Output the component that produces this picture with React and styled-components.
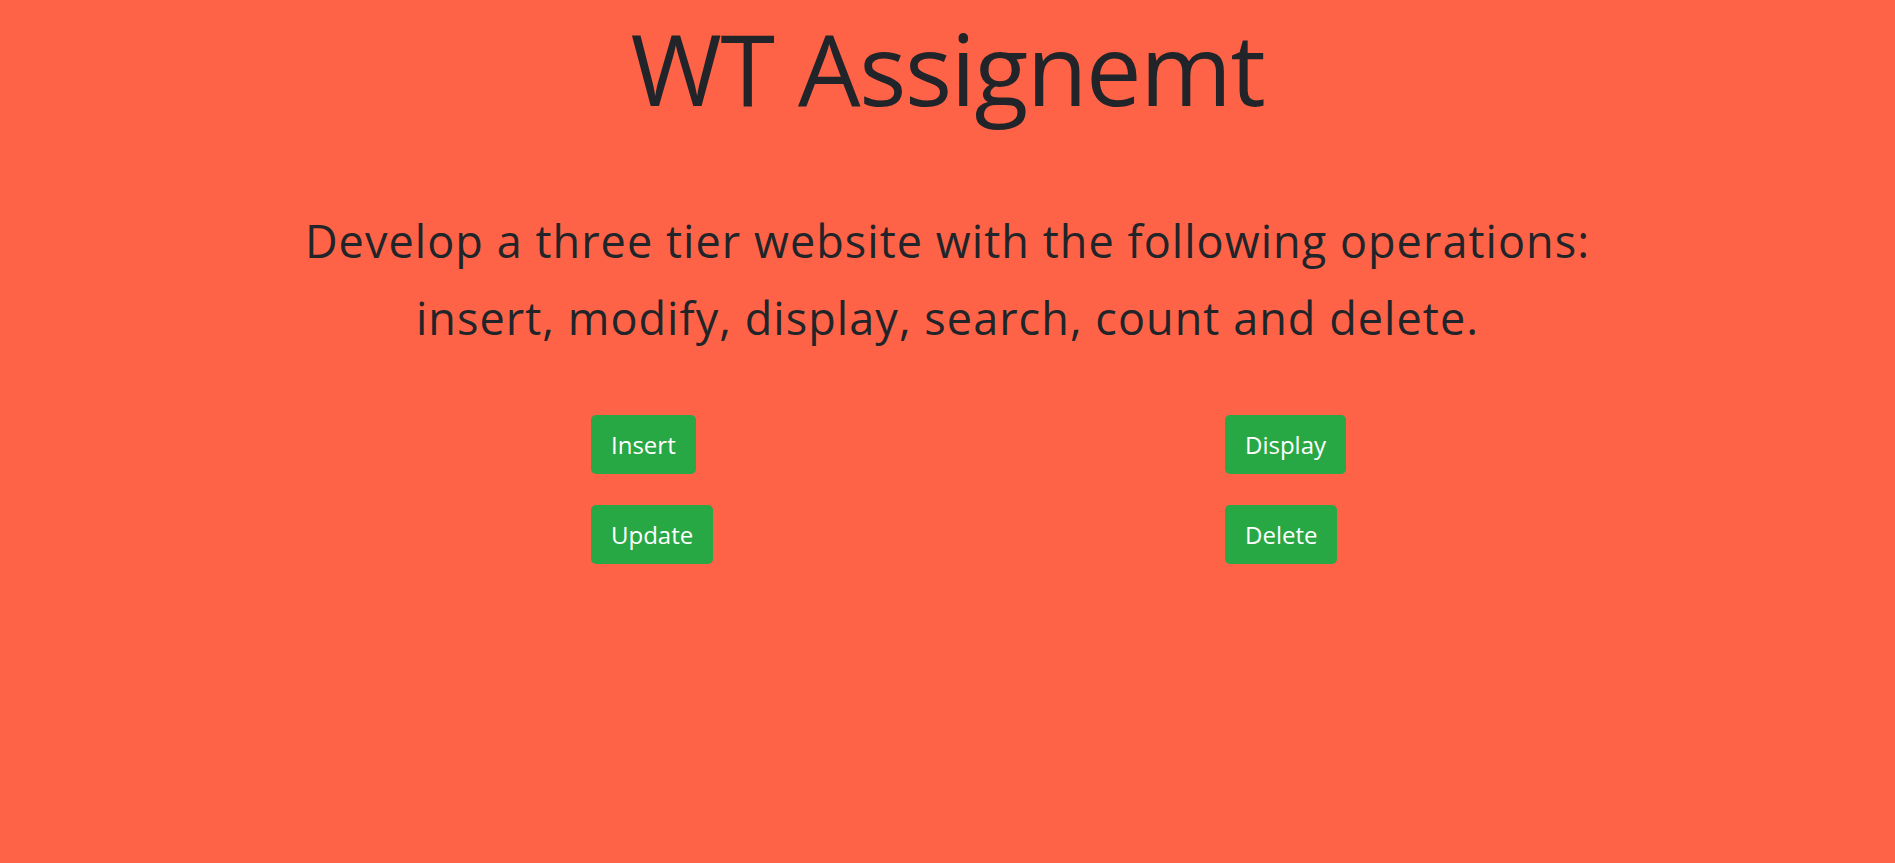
import React from "react";
import styled, { createGlobalStyle } from "styled-components";

const Global = createGlobalStyle`
  html, body { margin: 0; padding: 0; }
  body {
    background: #ff6347;
    font-family: "Open Sans", "Noto Sans", sans-serif;
    color: #212529;
  }
`;

const Page = styled.main`
  min-height: 100vh;
  display: flex;
  flex-direction: column;
`;

const Title = styled.h1`
  margin: 0;
  text-align: center;
  font-size: 99px;
  font-weight: 400;
  letter-spacing: -1.4px;
  line-height: 135px;
`;

const Subtitle = styled.h2`
  margin: 67px 0 0;
  text-align: center;
  font-size: 45px;
  font-weight: 400;
  letter-spacing: 1.05px;
  line-height: 77px;
`;

const ButtonGrid = styled.div`
  margin-top: 59px;
  display: grid;
  grid-template-columns: 634px 634px;
  row-gap: 31px;
  padding-left: 591px;
`;

const Button = styled.button`
  justify-self: start;
  height: 59px;
  padding: 0 20px;
  border: none;
  border-radius: 5px;
  background: #28a745;
  color: #fff;
  font-family: "Open Sans", "Noto Sans", sans-serif;
  font-size: 24px;
  cursor: pointer;
`;

export default function App() {
  return (
    <>
      <Global />
      <Page>
        <Title>WT Assignemt</Title>
        <Subtitle>
          Develop a three tier website with the following operations:
          <br />
          insert, modify, display, search, count and delete.
        </Subtitle>
        <ButtonGrid>
          <Button>Insert</Button>
          <Button>Display</Button>
          <Button>Update</Button>
          <Button>Delete</Button>
        </ButtonGrid>
      </Page>
    </>
  );
}
